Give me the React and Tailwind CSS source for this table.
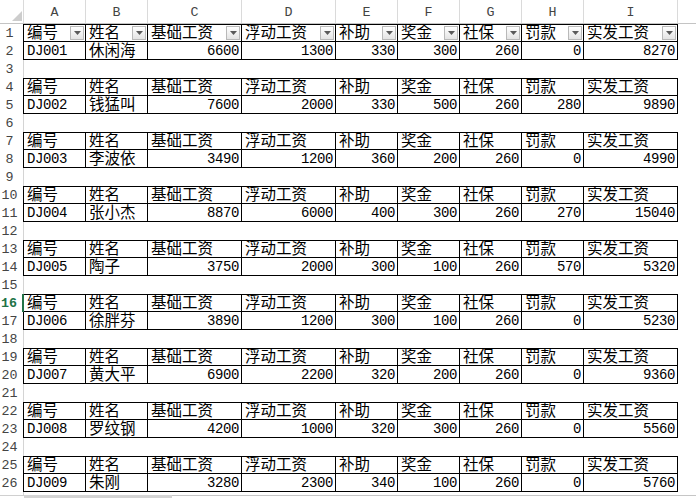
import React from "react";

const HEAD_W = [62, 62, 94, 94, 62, 62, 62, 62, 94];
const LETTERS = ["A", "B", "C", "D", "E", "F", "G", "H", "I"];
const LABELS = ["编号", "姓名", "基础工资", "浮动工资", "补助", "奖金", "社保", "罚款", "实发工资"];
const DATA = [
  ["DJ001", "休闲海", 6600, 1300, 330, 300, 260, 0, 8270],
  ["DJ002", "钱猛叫", 7600, 2000, 330, 500, 260, 280, 9890],
  ["DJ003", "李波依", 3490, 1200, 360, 200, 260, 0, 4990],
  ["DJ004", "张小杰", 8870, 6000, 400, 300, 260, 270, 15040],
  ["DJ005", "陶子", 3750, 2000, 300, 100, 260, 570, 5320],
  ["DJ006", "徐胖芬", 3890, 1200, 300, 100, 260, 0, 5230],
  ["DJ007", "黄大平", 6900, 2200, 320, 200, 260, 0, 9360],
  ["DJ008", "罗纹钢", 4200, 1000, 320, 300, 260, 0, 5560],
  ["DJ009", "朱刚", 3280, 2300, 340, 100, 260, 0, 5760],
];

const isCJK = (s) => /[\u4e00-\u9fff]/.test(String(s));

function FilterBtn() {
  return (
    <div className="absolute right-[1px] top-[1px] w-[14px] h-[14px] border border-[#b9b9b9] bg-linear-to-b from-white to-[#e4e4e4] flex items-center justify-center">
      <svg width="7" height="4" viewBox="0 0 7 4">
        <polygon points="0,0 7,0 3.5,4" fill="#5a5a5a" />
      </svg>
    </div>
  );
}

function Cell({ value, idx, top, filter, green }) {
  const num = typeof value === "number";
  const cjk = isCJK(value);
  const widthCls =
    idx === 0
      ? green
        ? "w-[62px]"
        : "w-[63px] border-l"
      : HEAD_W[idx] === 94
      ? "w-[94px]"
      : "w-[62px]";
  return (
    <div
      className={`relative h-[18px] shrink-0 border-r border-b border-black flex items-end ${widthCls} ${
        top ? "border-t" : ""
      } ${num ? "justify-end pr-[2px]" : "pl-[3px]"}`}
    >
      <span
        className={
          cjk
            ? "font-['Liberation_Sans','Noto_Sans_CJK_SC',sans-serif] text-[15.5px] leading-[16px] text-black whitespace-nowrap"
            : "font-['Liberation_Mono',monospace] text-[14px] tracking-[-0.4px] leading-[15px] text-black whitespace-nowrap"
        }
      >
        {value}
      </span>
      {filter && <FilterBtn />}
    </div>
  );
}

function RowHead({ n, active }) {
  return (
    <div
      className={`h-full shrink-0 flex items-end justify-center pr-[4px] font-['Liberation_Mono',monospace] text-[13.33px] leading-[16px] ${
        active
          ? "w-[24px] border-r-2 border-[#217346] text-[#217346] font-bold"
          : "w-[23px] text-[#444]"
      }`}
    >
      {n}
    </div>
  );
}

function TableRow({ n, values, top, filter }) {
  const active = n === 16;
  return (
    <div className="flex h-[18px]">
      <RowHead n={n} active={active} />
      {values.map((v, i) => (
        <Cell key={i} value={v} idx={i} top={top} filter={filter} green={active && i === 0} />
      ))}
      <div className="flex-1" />
    </div>
  );
}

function EmptyRow({ n, h = "h-[18px]" }) {
  return (
    <div className={`flex ${h}`}>
      <RowHead n={n} />
      <div className="flex-1 border-l border-[#d4d4d4]" />
    </div>
  );
}

export default function App() {
  const rows = [];
  DATA.forEach((d, i) => {
    const base = i * 3 + 1;
    rows.push(<TableRow key={`h${i}`} n={base} values={LABELS} top filter={i === 0} />);
    rows.push(<TableRow key={`d${i}`} n={base + 1} values={d} />);
    if (i < DATA.length - 1) rows.push(<EmptyRow key={`e${i}`} n={base + 2} />);
  });

  return (
    <div className="w-[696px] h-[498px] overflow-hidden bg-white flex flex-col">
      <div className="flex h-[24px] shrink-0 border-b border-[#c4c4c4]">
        <div className="w-[24px] shrink-0 border-r border-[#dadada] flex items-end justify-end pb-[2px] pr-[1px]">
          <svg width="10" height="10" viewBox="0 0 10 10">
            <polygon points="10,0 10,10 0,10" fill="#cdcdcd" />
          </svg>
        </div>
        {LETTERS.map((l, i) => (
          <div
            key={l}
            className={`${HEAD_W[i] === 94 ? "w-[94px]" : "w-[62px]"} shrink-0 border-r border-[#dadada] flex items-end justify-center pb-[3px] font-['Liberation_Mono',monospace] text-[13.33px] leading-[15px] text-[#444]`}
          >
            {l}
          </div>
        ))}
        <div className="flex-1" />
      </div>
      {rows}
      <EmptyRow n="" h="h-[3px]" />
      <div className="flex h-[3px]">
        <div className="w-[24px] border-t border-[#d0d0d0]" />
        <div className="w-[148px] bg-[#d4d4d4]" />
        <div className="flex-1 border-t border-[#c6c6c6]" />
      </div>
    </div>
  );
}
